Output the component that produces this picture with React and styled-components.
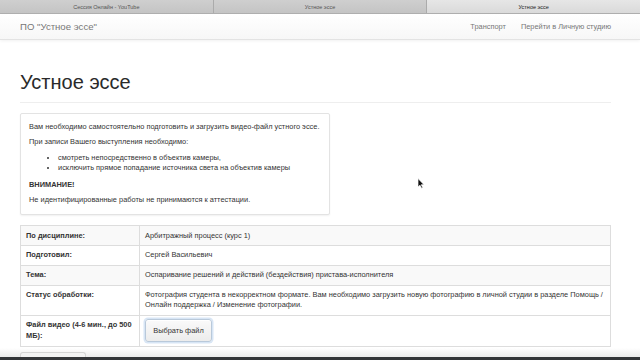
import React from "react";
import styled, { createGlobalStyle } from "styled-components";

const Global = createGlobalStyle`
  html, body { margin: 0; padding: 0; background: #fff; overflow: hidden; }
  body { font-family: "Liberation Sans", Arial, sans-serif; color: #333; width: 640px; height: 360px; }
  * { box-sizing: border-box; }
`;

const Page = styled.div`
  width: 640px;
  height: 360px;
  position: relative;
  overflow: hidden;
  background: #fff;
`;

const TabBar = styled.div`
  display: flex;
  height: 14px;
  background: #c6c6c6;
  border-bottom: 1px solid #b0b0b0;
`;

const Tab = styled.div`
  flex: 1;
  display: flex;
  align-items: center;
  justify-content: center;
  font-size: 5.5px;
  color: ${(p) => (p.$active ? "#222" : "#555")};
  background: ${(p) => (p.$active ? "linear-gradient(#e6e6e6, #dadada)" : "linear-gradient(#cfcfcf, #c4c4c4)")};
  border-left: 1px solid #ababab;
  &:first-child { border-left: none; }
`;

const Navbar = styled.div`
  height: 26px;
  display: flex;
  align-items: center;
  justify-content: space-between;
  padding: 0 29px 0 20px;
  background: linear-gradient(#ffffff, #f7f7f7);
  border-bottom: 1px solid #e3e3e3;
  box-shadow: 0 1px 3px rgba(0, 0, 0, 0.06);
`;

const Brand = styled.div`
  font-size: 9.6px;
  color: #777;
`;

const NavLinks = styled.div`
  display: flex;
  gap: 15px;
  font-size: 7.4px;
  color: #777;
`;

const Container = styled.div`
  width: 591px;
  margin-left: 20px;
`;

const Header = styled.div`
  margin-top: 28px;
  padding-bottom: 6px;
  border-bottom: 1px solid #eee;
`;

const Title = styled.h1`
  margin: 0;
  font-size: 20px;
  font-weight: 400;
  color: #2a2a2a;
  line-height: 28px;
`;

const Well = styled.div`
  margin-top: 10px;
  width: 310px;
  padding: 8px 7px 9px 8px;
  background: #fff;
  border: 1px solid #e3e3e3;
  border-radius: 2px;
  box-shadow: 0 1px 2px rgba(0, 0, 0, 0.06);
  font-size: 7.4px;
  line-height: 10.4px;
  color: #333;
`;

const P = styled.p`
  margin: 0 0 5px;
  white-space: nowrap;
  font-weight: ${(p) => (p.$bold ? 700 : 400)};
  &:last-child { margin-bottom: 0; }
`;

const List = styled.ul`
  margin: 0 0 6px;
  padding-left: 29px;
  li { margin: 0; }
`;

const Table = styled.div`
  margin-top: 10px;
  border: 1px solid #ddd;
  display: grid;
  grid-template-columns: 118px minmax(0, 1fr);
  font-size: 7.4px;
  line-height: 10.4px;
  color: #333;
`;

const Cell = styled.div`
  display: flex;
  align-items: flex-start;
  padding: ${(p) => (p.$pad ? p.$pad : "4.2px 5px")};
  background: ${(p) => (p.$striped ? "#f9f9f9" : "#fff")};
  border-top: ${(p) => (p.$first ? "none" : "1px solid #ddd")};
  border-left: ${(p) => (p.$value ? "1px solid #ddd" : "none")};
  font-weight: ${(p) => (p.$label ? 700 : 400)};
`;

const FileButton = styled.button`
  display: block;
  font-family: inherit;
  font-size: 7.4px;
  color: #333;
  height: 23px;
  width: 67px;
  padding: 0;
  border: 1px solid #b9c9da;
  border-radius: 3px;
  background: linear-gradient(#fafafa, #ececec);
  box-shadow: 0 0 0 1.5px rgba(140, 180, 225, 0.35), inset 0 1px 0 #fff;
`;

const BottomFade = styled.div`
  position: absolute;
  left: 0;
  right: 0;
  bottom: 0;
  height: 12px;
  background: linear-gradient(rgba(230, 230, 230, 0), #ececec 70%);
`;

const GhostButton = styled.div`
  position: absolute;
  left: 20px;
  bottom: 2px;
  width: 66px;
  height: 6px;
  border: 1px solid #d4d4d4;
  border-bottom: none;
  border-radius: 3px 3px 0 0;
  background: #f2f2f2;
`;

const Dock = styled.div`
  position: absolute;
  left: 0;
  right: 0;
  bottom: 0;
  height: 3px;
  background: #333538;
`;

const Cursor = styled.svg`
  position: absolute;
  left: 417px;
  top: 178px;
`;

const rows = [
  { label: "По дисциплине:", value: "Арбитражный процесс (курс 1)", striped: true },
  { label: "Подготовил:", value: "Сергей Васильевич" },
  { label: "Тема:", value: "Оспаривание решений и действий (бездействия) пристава-исполнителя", striped: true },
  {
    label: "Статус обработки:",
    value:
      "Фотография студента в некорректном формате. Вам необходимо загрузить новую фотографию в личной студии в разделе Помощь / Онлайн поддержка / Изменение фотографии.",
  },
];

export default function App() {
  return (
    <Page>
      <Global />
      <TabBar>
        <Tab>Сессия Онлайн - YouTube</Tab>
        <Tab>Устное эссе</Tab>
        <Tab $active>Устное эссе</Tab>
      </TabBar>
      <Navbar>
        <Brand>ПО "Устное эссе"</Brand>
        <NavLinks>
          <span>Транспорт</span>
          <span>Перейти в Личную студию</span>
        </NavLinks>
      </Navbar>
      <Container>
        <Header>
          <Title>Устное эссе</Title>
        </Header>
        <Well>
          <P>Вам необходимо самостоятельно подготовить и загрузить видео-файл устного эссе.</P>
          <P>При записи Вашего выступления необходимо:</P>
          <List>
            <li>смотреть непосредственно в объектив камеры,</li>
            <li>исключить прямое попадание источника света на объектив камеры</li>
          </List>
          <P $bold>ВНИМАНИЕ!</P>
          <P>Не идентифицированные работы не принимаются к аттестации.</P>
        </Well>
        <Table>
          {rows.map((r, i) => (
            <React.Fragment key={r.label}>
              <Cell $label $striped={r.striped} $first={i === 0}>{r.label}</Cell>
              <Cell $value $striped={r.striped} $first={i === 0}>{r.value}</Cell>
            </React.Fragment>
          ))}
          <Cell $label>Файл видео (4-6 мин., до 500 МБ):</Cell>
          <Cell $value $pad="3.5px 5px">
            <FileButton>Выбрать файл</FileButton>
          </Cell>
        </Table>
      </Container>
      <Cursor width="8" height="11" viewBox="0 0 8 11">
        <path d="M1 0.5 L1 9 L3 7.2 L4.6 10.3 L5.8 9.7 L4.3 6.7 L7 6.7 Z" fill="#111" stroke="#fff" strokeWidth="0.7" />
      </Cursor>
      <BottomFade />
      <GhostButton />
      <Dock />
    </Page>
  );
}
